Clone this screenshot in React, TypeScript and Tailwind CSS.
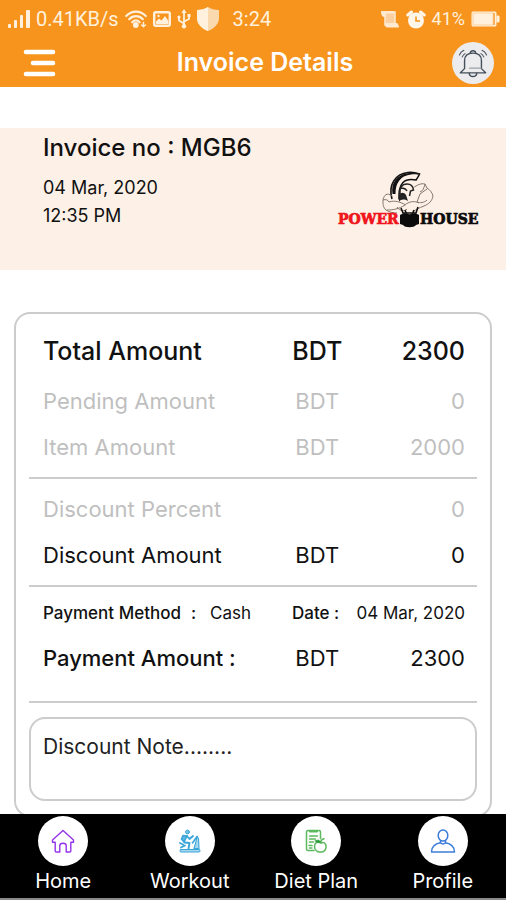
import React from 'react';

const SignalIcon = () => (
  <svg width="22" height="20" viewBox="0 0 22 20" fill="currentColor">
    <rect x="0" y="15" width="3" height="4" rx="1" />
    <rect x="6" y="11" width="3" height="8" rx="1" />
    <rect x="12" y="6" width="3" height="13" rx="1" />
    <rect x="18" y="1" width="4" height="18" rx="1" />
  </svg>
);

const WifiIcon = () => (
  <svg width="22" height="18" viewBox="0 0 22 18" fill="none" stroke="currentColor" strokeWidth="2.200" strokeLinecap="round">
    <path d="M1.2 6C6.8.2 15.2.2 20.8 6" />
    <path d="M4.2 9.2c4-4 9.600-4 13.600 0" />
    <path d="M7.200 12.200c2.400-2.300 5-2.300 7.400 0" />
    <circle cx="10.800" cy="15" r="1.800" fill="currentColor" />
    <path d="M18.500 12.500v3.500M16.500 15l2 1.500 2-1.500" strokeWidth="1.400" />
  </svg>
);

const ImageIcon = () => (
  <svg width="18" height="16" viewBox="0 0 18 16">
    <rect x="1.200" y="1.200" width="15.600" height="13.600" rx="1.500" fill="none" stroke="currentColor" strokeWidth="2.400" />
    <path d="M3 13V10.500l3-3 2.500 2L12 5l3.500 5v3z" fill="currentColor" />
    <circle cx="5.500" cy="5" r="1.200" fill="currentColor" />
  </svg>
);

const UsbIcon = () => (
  <svg width="14" height="20" viewBox="0 0 14 20" fill="none" stroke="currentColor" strokeWidth="1.800">
    <path d="M7 3v14M7 14.500L2 11.500V8M7 12.500l5-2.500V7" />
    <path d="M7 0l2.600 4H4.400z" fill="currentColor" stroke="none" />
    <circle cx="2" cy="8" r="1.600" fill="currentColor" stroke="none" />
    <rect x="10.500" y="5" width="3" height="3" fill="currentColor" stroke="none" />
    <circle cx="7" cy="17.300" r="2.200" fill="currentColor" stroke="none" />
  </svg>
);

const ShieldIcon = () => (
  <svg width="22" height="24" viewBox="0 0 22 24">
    <path d="M11 0c3 2 6.500 3 11 3v8c0 6-4.500 10.500-11 13C4.500 21.500 0 17 0 11V3c4.500 0 8-1 11-3z" fill="#fbd9ae" />
    <path d="M11 0C8 2 4.500 3 0 3v8c0 6 4.500 10.500 11 13z" fill="#fff1de" />
  </svg>
);

const ScrollIcon = () => (
  <svg width="20" height="18" viewBox="0 0 20 18">
    <path d="M5 2h10v13H5z" fill="#fbd0a0" stroke="#ffe9d0" strokeWidth="1.500" />
    <path d="M1 1h13v2.500H6V7H3.500C1.500 6 1 4 1 1z" fill="#ffe9d0" />
    <path d="M5 13h12c1 1 2 2.500 2 4.500H7c-1.500 0-2-2-2-4.500z" fill="#ffe9d0" />
  </svg>
);

const AlarmIcon = () => (
  <svg width="20" height="19" viewBox="0 0 20 19">
    <circle cx="10" cy="10.500" r="8" fill="#fff6ea" />
    <path d="M1.800 5L5.500 2M18.200 5L14.500 2" stroke="#fff6ea" strokeWidth="3" strokeLinecap="round" />
    <path d="M10 6.500v4.500h4" fill="none" stroke="#f7941d" strokeWidth="1.600" />
  </svg>
);

const BatteryIcon = () => (
  <svg width="29" height="16" viewBox="0 0 29 16">
    <rect x="0.500" y="0.500" width="25" height="15" rx="1.500" fill="#fff1de" />
    <path d="M23 2v12" stroke="#f7941d" strokeWidth="1.500" />
    <path d="M2 2h20v12H2z" fill="none" stroke="#fbc98d" strokeWidth="0.800" />
    <rect x="25.500" y="4.500" width="3" height="7" rx="1" fill="#fff1de" />
  </svg>
);

const MenuIcon = () => (
  <svg width="34" height="28" viewBox="0 0 34 28" stroke="#fff" strokeWidth="4.600" strokeLinecap="round">
    <path d="M4 3h27M11 14h20M4 25h27" />
  </svg>
);

const BellIcon = () => (
  <svg width="30" height="30" viewBox="0 0 32 32" fill="none" stroke="#46505a" strokeWidth="1.500" strokeLinecap="round" strokeLinejoin="round">
    <path d="M7 22V13.500C7 8.500 10 5.500 16 5.500s9 3 9 8V22l4.500 4.500h-27z" />
    <path d="M13 5.500c.5-3.500 5.500-3.500 6 0M12 27c.5 4.500 7.500 4.500 8 0" />
    <path d="M12.500 21.500h12" stroke="#9aa0a6" />
    <path d="M1.500 7.500c.8-2 2.500-4 4.800-5M4.500 9.500c.6-1.500 1.600-2.700 3-3.500M30.500 7.500c-.8-2-2.500-4-4.800-5M27.500 9.500c-.6-1.500-1.600-2.700-3-3.500" strokeWidth="1.100" />
  </svg>
);

const PowerHouseLogo = () => (
  <svg width="142" height="60" viewBox="0 0 142 60" role="img" aria-label="Power House">
    {/* helmet */}
    <path d="M55 29C51 15 58 4 71 2.500c5-.6 8 .3 11.500 1.500-1 2.500-2 4-3.500 6-5-1-10-.5-13 2.500-4 4-4 10-4 17" fill="none" stroke="#111" strokeWidth="1.600" />
    <path d="M55.500 24C53.500 13 60 4.500 71 3.200c4-.4 7 .2 10.500 1.200-10-.6-16 1.600-19.500 6.600-3 4-3.500 8-3.500 13z" fill="#111" />
    <path d="M63 24c-1-6 2-10 7-10 4 0 6 2 6.500 6l-3 1-1 5M64 18c3 0 5 1 6 3" fill="none" stroke="#222" strokeWidth="1.500" />
    <path d="M62 25c2-3 5-3 7 0l2 6c-4-2-7-2-9 1z" fill="#222" />
    {/* arms and shoulders */}
    <g fill="none" stroke="#84776c" strokeWidth="1">
      <path d="M55 26c-5-4-8-1-9 4 0 5 0 7 3 10 3 2 7 3 11 3" />
      <path d="M46 30c3-1 5 0 6 2 6-2 11 0 17 3" />
      <path d="M76 18c4-3 8-5 12-4l2 4c3 2 5 4 6 8-1 5-4 8-9 10-5 2-8 3-11 6" />
      <path d="M88 14c-1 4-2 7-5 8M90 19l-7 5-3 8c3 1 7 1 10-2" />
      <path d="M69 34c5-3 9-3 13-1M50 40c6 0 12-1 18-5M60 37c3 4 7 5 10 2" />
    </g>
    {/* kettlebell */}
    <path d="M64 38l2 5h13l2-6M68 40l2 5M77 40l-2 5" fill="none" stroke="#111" strokeWidth="1.600" />
    <path d="M63 45l4-2c2 1.500 9 1.500 11 0l4 2v9l-3 1c-2 3-11 3-13 0l-3-1z" fill="#0b0b0b" />
    <g fontFamily="DejaVu Serif, serif" fontWeight="700" fontSize="14" strokeWidth="0.700">
      <text x="1" y="54" fill="#f0141c" stroke="#f0141c">POWER</text>
      <text x="83" y="54" fill="#0b0b0b" stroke="#0b0b0b">HOUSE</text>
    </g>
  </svg>
);

const HomeIcon = () => (
  <svg width="24" height="24" viewBox="0 0 24 24" fill="none" stroke="#9333ea" strokeWidth="1.400" strokeLinejoin="round" strokeLinecap="round">
    <path d="M12 1.500L1.500 11v2.200h2.700V22c0 .8.300 1 1 1h3.600v-6.500c0-3 6.400-3 6.400 0V23h3.600c.7 0 1-.3 1-1v-8.800h2.700V11z" />
  </svg>
);

const WorkoutIcon = () => (
  <svg width="24" height="24" viewBox="0 0 24 24" fill="none" stroke="#3aa5d8" strokeWidth="1.600" strokeLinecap="round" strokeLinejoin="round">
    <rect x="2" y="20.500" width="20" height="2.500" rx="1" fill="#a5d8ef" strokeWidth="1" />
    <circle cx="9.500" cy="3" r="1.900" fill="#7cc6e8" strokeWidth="1" />
    <path d="M5 6.500L3.500 10 6 13l3-6z" fill="#5fb8e2" />
    <path d="M9 7l2.500 3L15 7M6.500 13.500l5 .5-1 5.500M2 14l3 1.500M3 18.500l4-2" strokeWidth="1.900" />
    <path d="M19 7.500l1.500 2 .5 10h-5l1.500-5z" fill="#a5d8ef" strokeWidth="1.100" />
    <path d="M19 7.500l-4.500 6.500" strokeWidth="1.600" />
  </svg>
);

const DietIcon = () => (
  <svg width="24" height="24" viewBox="0 0 24 24" fill="none" stroke="#5cb85c" strokeWidth="1.500" strokeLinecap="round" strokeLinejoin="round">
    <path d="M10 21.500H4c-1 0-1.500-.5-1.500-1.500V3C2.500 2 3 1.500 4 1.500h11c1 0 1.500.5 1.500 1.500v6.500" />
    <path d="M6 2.500h7" strokeWidth="2.200" />
    <path d="M5.500 7h8M5.500 10h6M5.500 13h4M5 16.500h3M5.500 19h2.500" />
    <path d="M17 14c-4-2-6.500 0-6.500 3.500s3 6 6 5.500c3.500.3 6-2.500 5.500-6-.3-3-2.500-4.500-5-3z" fill="#fff" />
    <path d="M17 13.500c-.3-2 1-3.300 3-3.700" />
    <path d="M11.500 12c2-1.500 4-1 5 1-2 .800-4 .500-5-1z" fill="#2f9e3f" stroke="#2f9e3f" strokeWidth="1" />
  </svg>
);

const ProfileIcon = () => (
  <svg width="26" height="24" viewBox="0 0 26 24" fill="none" stroke="#3b7dd8" strokeWidth="1.500" strokeLinejoin="round">
    <ellipse cx="13" cy="6.500" rx="4.800" ry="5.500" />
    <path d="M10.500 11.500v2.300c-5.500 1-9 3.200-9 9.200h23c0-6-3.500-8.200-9-9.200v-2.300M10.500 13.800c1.500 1.500 3.500 1.500 5 0" />
  </svg>
);

const navItems = [
  { label: 'Home', Icon: HomeIcon },
  { label: 'Workout', Icon: WorkoutIcon },
  { label: 'Diet Plan', Icon: DietIcon },
  { label: 'Profile', Icon: ProfileIcon },
];

type Row = { label: string; unit: string; value: string; style: string; labelStyle: string };

const totals: Row[] = [
  { label: 'Total Amount', unit: 'BDT', value: '2300', style: 'h-[52px] text-[25px] font-medium', labelStyle: 'font-medium' },
  { label: 'Pending Amount', unit: 'BDT', value: '0', style: 'h-[46px] text-[22px] text-[#bfbfbf]', labelStyle: 'font-normal' },
  { label: 'Item Amount', unit: 'BDT', value: '2000', style: 'h-[46px] text-[22px] text-[#bfbfbf]', labelStyle: 'font-normal' },
];

const discounts: Row[] = [
  { label: 'Discount Percent', unit: '', value: '0', style: 'h-[46px] text-[22px] text-[#bfbfbf]', labelStyle: 'font-normal' },
  { label: 'Discount Amount', unit: 'BDT', value: '0', style: 'h-[46px] text-[22px]', labelStyle: 'font-normal' },
];

const payment: Row[] = [
  { label: 'Payment Amount :', unit: 'BDT', value: '2300', style: 'h-12 text-[22px]', labelStyle: 'font-medium' },
];

function AmountTable({ rows }: { rows: Row[] }) {
  return (
    <table className="w-full table-fixed">
      <tbody>
        {rows.map((row) => (
          <tr key={row.label} className={row.style}>
            <th scope="row" className={`w-[59%] p-0 text-left whitespace-nowrap ${row.labelStyle}`}>
              {row.label}
            </th>
            <td className="w-[12%] p-0 text-center">{row.unit}</td>
            <td className="p-0 text-right">{row.value}</td>
          </tr>
        ))}
      </tbody>
    </table>
  );
}

const Divider = () => <hr className="-mr-3 -ml-3.5 my-[7px] border-t-2 border-[#cccccc]" />;

export default function App() {
  return (
    <div className="flex h-screen flex-col bg-white font-['Inter',sans-serif] text-[#111]">
      <header className="shrink-0 bg-[#f7941d] text-white">
        <div className="flex h-[38px] items-center justify-between pr-1.5 pl-2 font-['Roboto',sans-serif] text-xl text-[#fff1de]">
          <div className="flex items-center gap-1.5">
            <SignalIcon />
            <span>0.41KB/s</span>
            <WifiIcon />
            <ImageIcon />
            <UsbIcon />
            <ShieldIcon />
            <span className="pl-2">3:24</span>
          </div>
          <div className="flex items-center gap-1.5">
            <ScrollIcon />
            <AlarmIcon />
            <span className="text-lg">41%</span>
            <BatteryIcon />
          </div>
        </div>
        <div className="flex h-[49px] items-center justify-between pr-3 pl-[22px]">
          <button type="button" aria-label="Menu" className="flex w-14">
            <MenuIcon />
          </button>
          <h1 className="text-[25px] font-semibold">Invoice Details</h1>
          <button type="button" aria-label="Notifications" className="flex size-[42px] items-center justify-center rounded-full bg-[#ececee]">
            <BellIcon />
          </button>
        </div>
      </header>

      <main className="min-h-0 flex-1 overflow-y-auto [scrollbar-width:none]">
        <section className="mt-[41px] flex h-[142px] justify-between bg-[#fdf0e6] pr-[27px] pl-[43px]">
          <div>
            <h2 className="pt-0.5 text-2xl leading-9 font-medium">Invoice no : MGB6</h2>
            <p className="mt-2 text-lg leading-7">04 Mar, 2020</p>
            <p className="text-lg leading-7">12:35 PM</p>
          </div>
          <div className="pt-[42px]">
            <PowerHouseLogo />
          </div>
        </section>

        <section className="mx-3.5 mt-[42px] rounded-2xl border-2 border-[#cccccc] pt-3 pr-[25px] pb-3.5 pl-[27px]">
          <AmountTable rows={totals} />
          <Divider />
          <AmountTable rows={discounts} />
          <Divider />
          <div className="flex h-10 items-center text-[17px]">
            <p className="w-[59%] whitespace-nowrap">
              <span className="font-medium">Payment Method</span>
              <span className="px-2.5 font-medium">:</span>
              <span className="pl-1">Cash</span>
            </p>
            <p className="flex flex-1 justify-between whitespace-nowrap">
              <span className="font-medium">Date :</span>
              <span>04 Mar, 2020</span>
            </p>
          </div>
          <AmountTable rows={payment} />
          <div className="pt-3">
            <Divider />
          </div>
          <div className="-mr-3 -ml-3.5 pt-[7px]">
            <textarea
              aria-label="Discount note"
              placeholder="Discount Note........"
              className="block h-[84px] w-full resize-none rounded-2xl border-2 border-[#cccccc] px-3 py-3.5 text-[21px] leading-7 outline-none placeholder:text-[#222]"
            />
          </div>
        </section>
      </main>

      <nav className="grid shrink-0 grid-cols-4 border-b-2 border-[#8a8a8a] bg-black pt-0.5 pb-0.5">
        {navItems.map(({ label, Icon }) => (
          <a key={label} href={`#${label}`} className="flex flex-col items-center text-xl leading-[30px] text-white">
            <span className="flex size-[50px] items-center justify-center rounded-full bg-white">
              <Icon />
            </span>
            {label}
          </a>
        ))}
      </nav>
    </div>
  );
}
